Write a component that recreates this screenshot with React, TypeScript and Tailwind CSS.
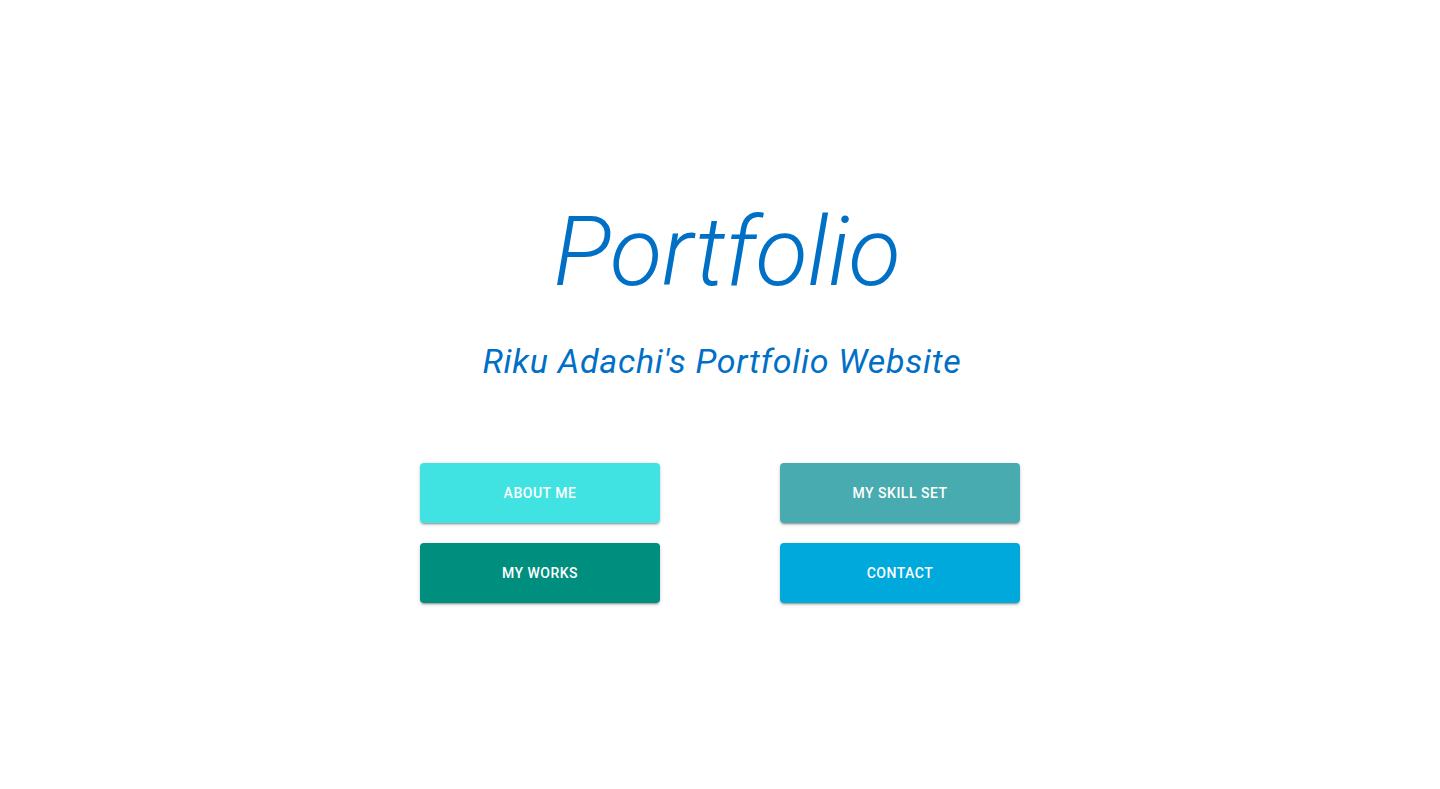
import React from "react";

const buttons = [
  { label: "About Me", cls: "bg-[#40e3e1]" },
  { label: "My Skill Set", cls: "bg-[#48abaf]" },
  { label: "My Works", cls: "bg-[#008e7e]" },
  { label: "Contact", cls: "bg-[#00a9dc]" },
];

export default function App() {
  return (
    <div className="min-h-[789px] w-full bg-white font-['Roboto',sans-serif] flex flex-col items-center pt-[196px]">
      <h1 className="pl-[14px] text-[96px] leading-[112px] font-light italic text-[#0070c6] tracking-[-0.3px]">
        Portfolio
      </h1>
      <h2 className="mt-[32px] pl-[4px] text-[34px] leading-[42px] italic font-normal text-[#0070c6] tracking-[0.72px]">
        Riku Adachi's Portfolio Website
      </h2>
      <div className="mt-[81px] grid grid-cols-[240px_240px] gap-x-[120px] gap-y-[20px]">
        {buttons.map((b) => (
          <button
            key={b.label}
            className={`${b.cls} h-[60px] w-[240px] pt-[1px] rounded-[4px] text-white text-[14px] font-medium uppercase tracking-[0.5px] shadow-[0px_3px_1px_-2px_rgba(0,0,0,0.2),0px_2px_2px_0px_rgba(0,0,0,0.14),0px_1px_5px_0px_rgba(0,0,0,0.12)]`}
          >
            {b.label}
          </button>
        ))}
      </div>
    </div>
  );
}
